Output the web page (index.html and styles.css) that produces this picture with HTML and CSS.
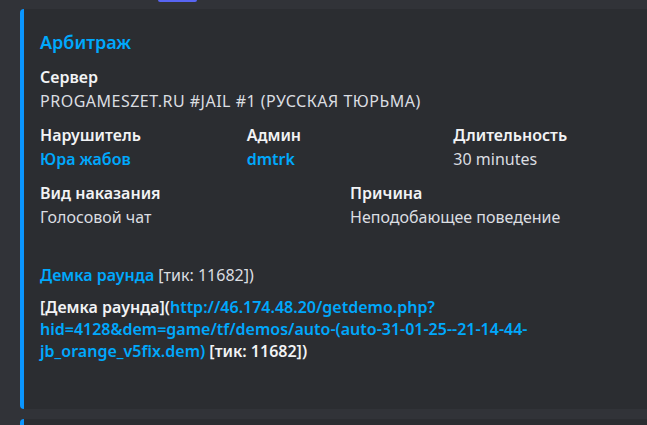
FILE: index.html
```html
<!DOCTYPE html>
<html lang="ru">
<head>
    <meta charset="UTF-8">
    <meta name="viewport" content="width=device-width, initial-scale=1.0">
    <title>Арбитраж</title>
    <link rel="stylesheet" href="styles.css">
</head>
<body>
    <div class="tab"></div>

    <div class="embed">
        <div class="embed-grid">
            <div class="title">Арбитраж</div>

            <div class="field full">
                <div class="field-name">Сервер</div>
                <div class="field-value caps">PROGAMESZET.RU #JAIL #1 (РУССКАЯ ТЮРЬМА)</div>
            </div>

            <div class="field third">
                <div class="field-name">Нарушитель</div>
                <div class="field-value"><span class="link bold">Юра жабов</span></div>
            </div>
            <div class="field third">
                <div class="field-name">Админ</div>
                <div class="field-value"><span class="link bold">dmtrk</span></div>
            </div>
            <div class="field third">
                <div class="field-name">Длительность</div>
                <div class="field-value">30 minutes</div>
            </div>

            <div class="field half">
                <div class="field-name">Вид наказания</div>
                <div class="field-value">Голосовой чат</div>
            </div>
            <div class="field half">
                <div class="field-name">Причина</div>
                <div class="field-value">Неподобающее поведение</div>
            </div>

            <div class="demo full">
                <span class="link bold">Демка раунда</span> [тик: 11682])
            </div>

            <div class="raw full">
                [Демка раунда](<span class="link">http://46.174.48.20/getdemo.php?<br>hid=4128&amp;dem=game/tf/demos/auto-(auto-31-01-25--21-14-44-<br>jb_orange_v5fix.dem)</span> [тик: 11682])
            </div>
        </div>
    </div>

    <div class="embed next"></div>
</body>
</html>
```

FILE: styles.css
```css
html, body {
    overflow: hidden;
}

body {
    margin: 0;
    background: #313338;
    font-family: "Noto Sans", "Open Sans", sans-serif;
    font-size: 16px;
    color: #dbdee1;
}

.tab {
    width: 39px;
    height: 2px;
    margin-left: 158px;
    background: #5865f2;
    border-radius: 0 0 4px 4px;
}

.embed {
    width: 648px;
    margin: 7px 0 0 20px;
    padding: 21px 16px 47px 16px;
    background: #2b2d31;
    border-left: 4px solid #0a96ff;
    border-radius: 4px;
}

.embed.next {
    margin-top: 10px;
    height: 40px;
    padding: 0;
}

.embed-grid {
    width: 612px;
    display: grid;
    grid-template-columns: repeat(12, 1fr);
    column-gap: 8px;
}

.title {
    grid-column: 1 / 13;
    font-size: 18px;
    font-weight: 600;
    line-height: 24px;
    color: #00a8fc;
}

.field {
    margin-top: 12px;
    min-width: 0;
}

.full {
    grid-column: 1 / 13;
}

.third {
    grid-column: span 4;
}

.half {
    grid-column: span 6;
}

.field-name {
    font-weight: 600;
    line-height: 22px;
    margin-bottom: 2px;
    color: #f2f3f5;
}

.field-value {
    line-height: 22px;
    color: #dbdee1;
}

.caps {
    letter-spacing: 0.5px;
}

.link {
    color: #00a8fc;
}

.bold {
    font-weight: 600;
}

.demo {
    margin-top: 36px;
    line-height: 22px;
}

.raw {
    margin-top: 10px;
    line-height: 22px;
    font-weight: 600;
    color: #f2f3f5;
}
```
